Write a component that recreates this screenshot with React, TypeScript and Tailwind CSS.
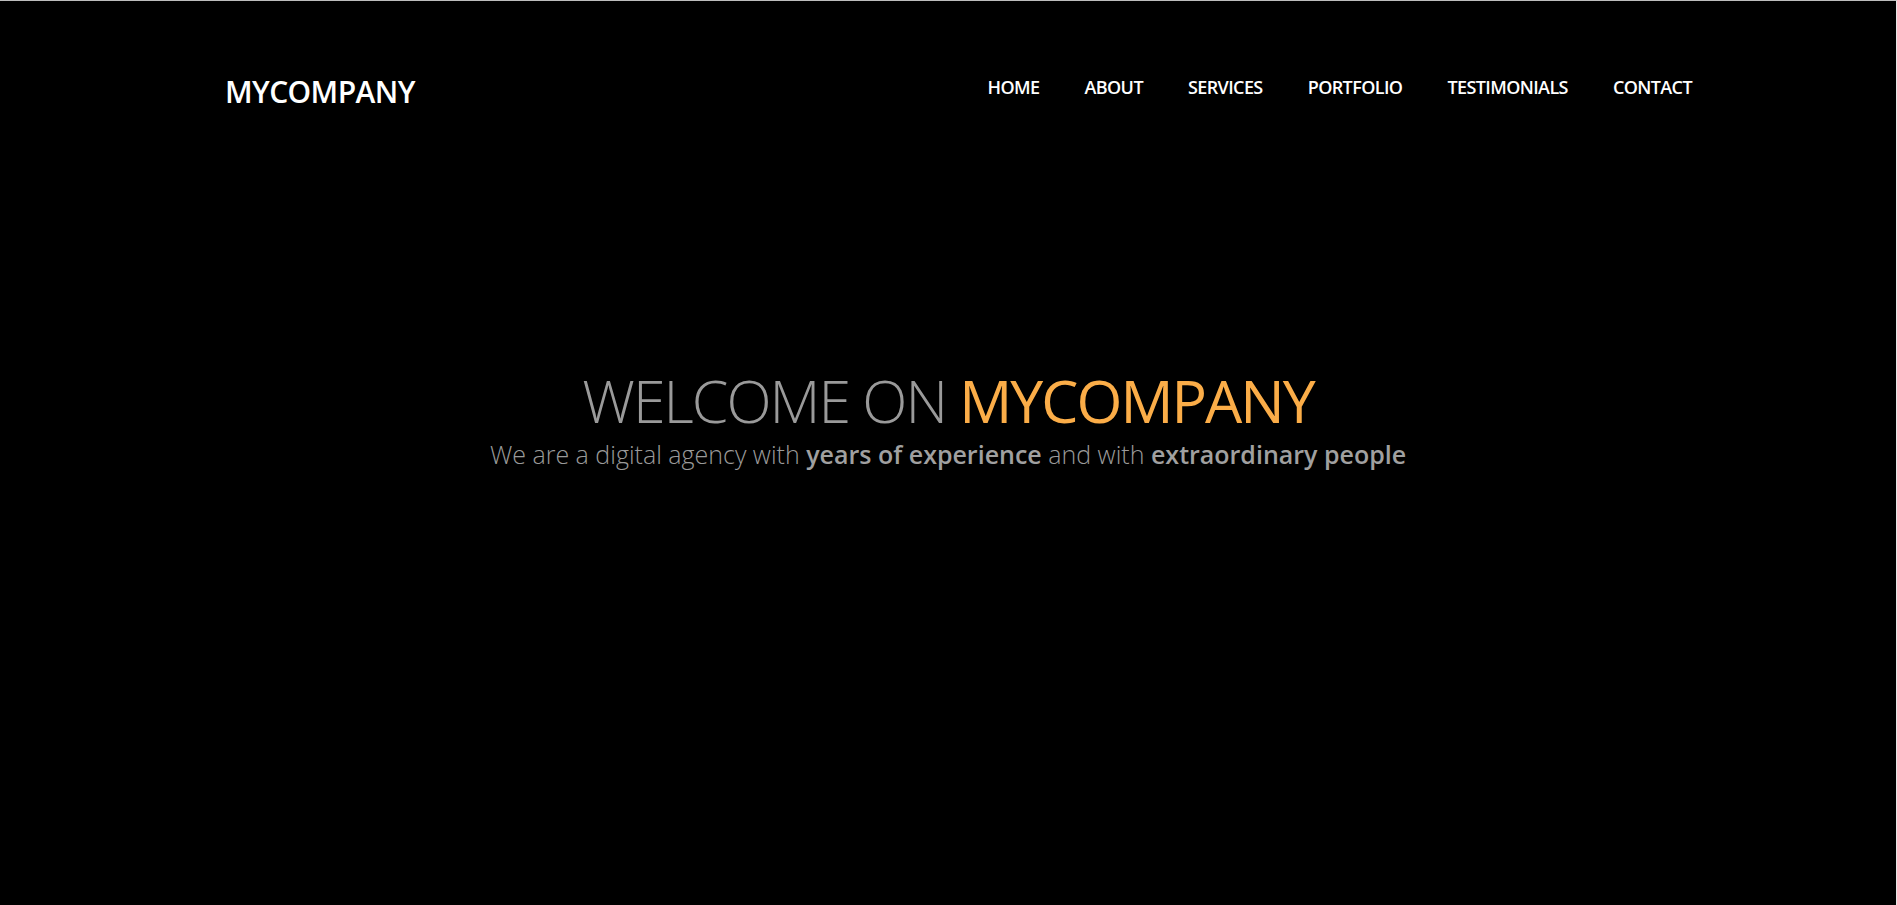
export default function App() {
  const links = ["HOME", "ABOUT", "SERVICES", "PORTFOLIO", "TESTIMONIALS", "CONTACT"];

  return (
    <div
      className="h-[905px] w-full overflow-hidden bg-black border-t border-r border-t-[#bdbdbd] border-r-[#e6e6e6]"
      style={{ fontFamily: '"Open Sans", "Liberation Sans", sans-serif' }}
    >
      <header className="flex items-center justify-between pl-[225px] pr-[204px] pt-[66px]">
        <a className="text-[30px] font-semibold tracking-[-0.6px] text-white leading-none mt-[10px]">MYCOMPANY</a>
        <nav className="flex gap-[45px]">
          {links.map((l) => (
            <a key={l} className="text-[18px] font-semibold tracking-[-0.6px] text-white leading-none">
              {l}
            </a>
          ))}
        </nav>
      </header>

      <section className="mt-[264px] flex flex-col items-center text-center">
        <h1 className="text-[59px] font-light tracking-[-2px] leading-none text-[#9a9a9a]">
          WELCOME ON <span className="font-normal text-[#fbad48]">MYCOMPANY</span>
        </h1>
        <p className="mt-[12px] text-[25px] font-light text-[#9a9a9a] leading-none">
          We are a digital agency with <b className="font-semibold text-[#a0a0a0]">years of experience</b> and with{" "}
          <b className="font-semibold text-[#a0a0a0]">extraordinary people</b>
        </p>
      </section>
    </div>
  );
}
